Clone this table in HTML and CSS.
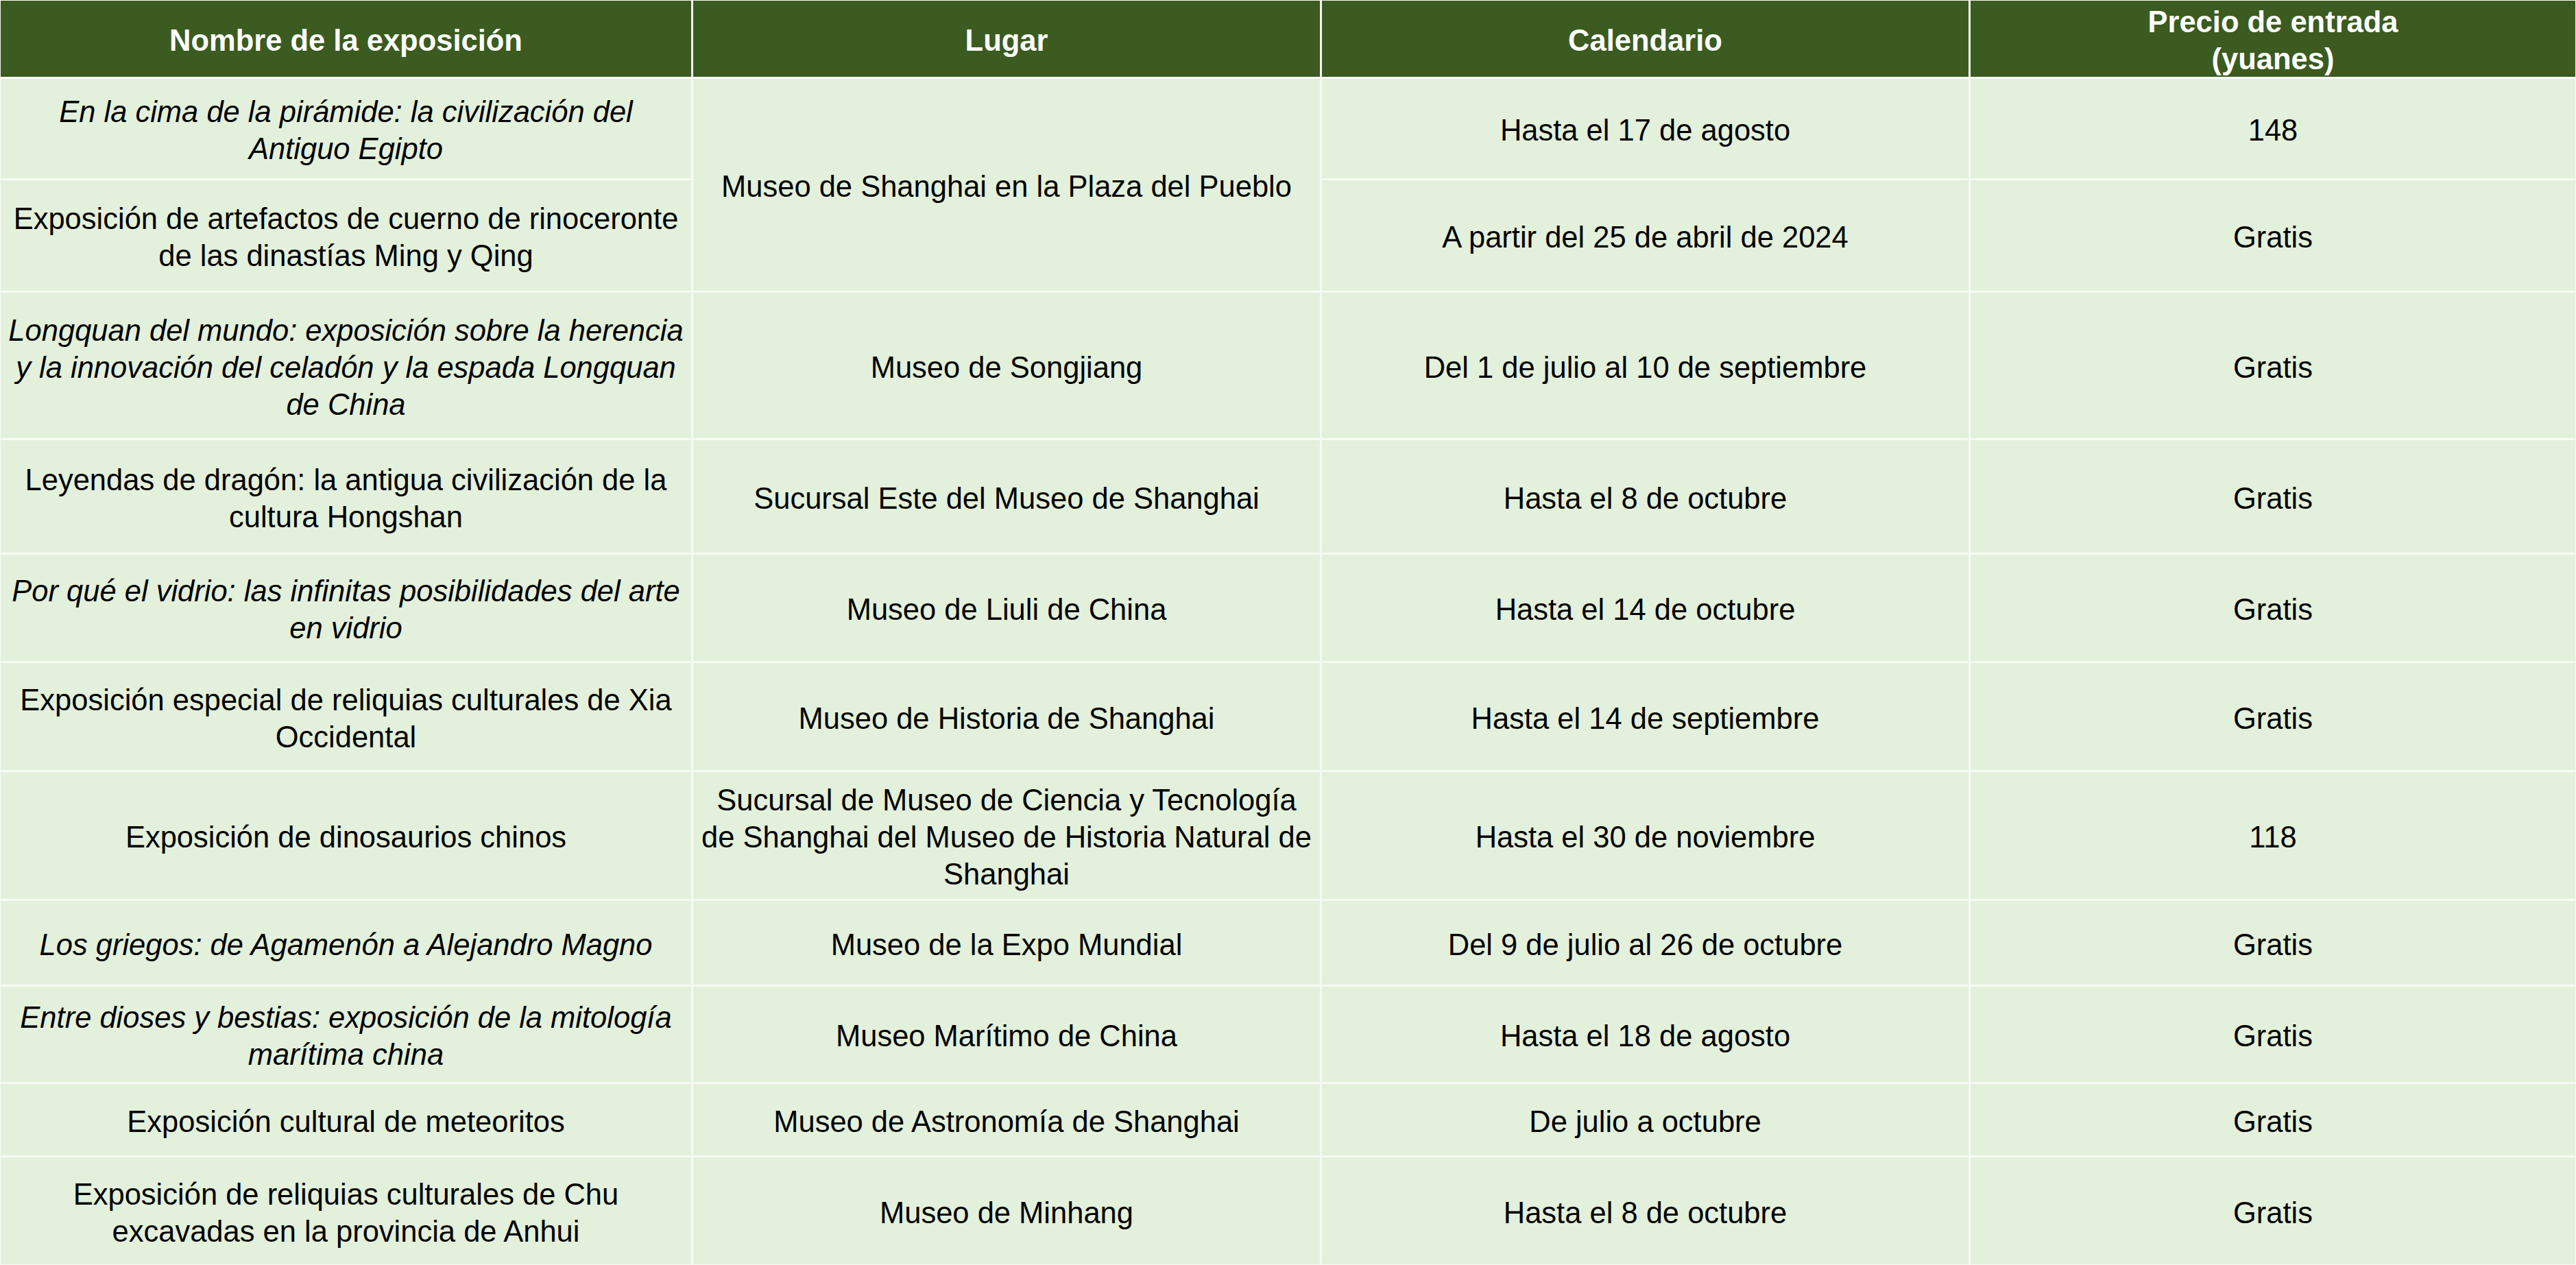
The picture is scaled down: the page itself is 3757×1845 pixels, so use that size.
FILE: index.html
```html
<!DOCTYPE html>
<html lang="es">
<head>
<meta charset="utf-8">
<title>Exposiciones en Shanghai</title>
<link rel="stylesheet" href="styles.css">
</head>
<body>
<div class="sheet">
  <div class="cell hd">Nombre de la exposición</div>
  <div class="cell hd">Lugar</div>
  <div class="cell hd">Calendario</div>
  <div class="cell hd">Precio de entrada<br>(yuanes)</div>

  <div class="cell it">En la cima de la pirámide: la civilización del<br>Antiguo Egipto</div>
  <div class="cell span2">Museo de Shanghai en la Plaza del Pueblo</div>
  <div class="cell">Hasta el 17 de agosto</div>
  <div class="cell">148</div>

  <div class="cell">Exposición de artefactos de cuerno de rinoceronte<br>de las dinastías Ming y Qing</div>
  <div class="cell">A partir del 25 de abril de 2024</div>
  <div class="cell">Gratis</div>

  <div class="cell it">Longquan del mundo: exposición sobre la herencia<br>y la innovación del celadón y la espada Longquan<br>de China</div>
  <div class="cell">Museo de Songjiang</div>
  <div class="cell">Del 1 de julio al 10 de septiembre</div>
  <div class="cell">Gratis</div>

  <div class="cell">Leyendas de dragón: la antigua civilización de la<br>cultura Hongshan</div>
  <div class="cell">Sucursal Este del Museo de Shanghai</div>
  <div class="cell">Hasta el 8 de octubre</div>
  <div class="cell">Gratis</div>

  <div class="cell it">Por qué el vidrio: las infinitas posibilidades del arte<br>en vidrio</div>
  <div class="cell">Museo de Liuli de China</div>
  <div class="cell">Hasta el 14 de octubre</div>
  <div class="cell">Gratis</div>

  <div class="cell">Exposición especial de reliquias culturales de Xia<br>Occidental</div>
  <div class="cell">Museo de Historia de Shanghai</div>
  <div class="cell">Hasta el 14 de septiembre</div>
  <div class="cell">Gratis</div>

  <div class="cell">Exposición de dinosaurios chinos</div>
  <div class="cell">Sucursal de Museo de Ciencia y Tecnología<br>de Shanghai del Museo de Historia Natural de<br>Shanghai</div>
  <div class="cell">Hasta el 30 de noviembre</div>
  <div class="cell">118</div>

  <div class="cell it">Los griegos: de Agamenón a Alejandro Magno</div>
  <div class="cell">Museo de la Expo Mundial</div>
  <div class="cell">Del 9 de julio al 26 de octubre</div>
  <div class="cell">Gratis</div>

  <div class="cell it">Entre dioses y bestias: exposición de la mitología<br>marítima china</div>
  <div class="cell">Museo Marítimo de China</div>
  <div class="cell">Hasta el 18 de agosto</div>
  <div class="cell">Gratis</div>

  <div class="cell">Exposición cultural de meteoritos</div>
  <div class="cell">Museo de Astronomía de Shanghai</div>
  <div class="cell">De julio a octubre</div>
  <div class="cell">Gratis</div>

  <div class="cell">Exposición de reliquias culturales de Chu<br>excavadas en la provincia de Anhui</div>
  <div class="cell">Museo de Minhang</div>
  <div class="cell">Hasta el 8 de octubre</div>
  <div class="cell">Gratis</div>
</div>
</body>
</html>
```

FILE: styles.css
```css
html, body {
  margin: 0;
  padding: 0;
  background: #ffffff;
  overflow: hidden;
}

.sheet {
  width: 3757px;
  height: 1845px;
  box-sizing: border-box;
  padding: 1px;
  background: #f7faf4;
  display: grid;
  grid-template-columns: 1007px 914px 943px 882px;
  grid-template-rows: 111px 145px 161px 212px 164px 155px 156px 185px 122px 139px 104px 156px;
  column-gap: 3px;
  row-gap: 3px;
  font-family: "Liberation Sans", Arial, sans-serif;
  font-size: 43.5px;
  line-height: 54px;
  color: #000000;
}

.cell {
  background: #e3f0db;
  display: flex;
  align-items: center;
  justify-content: center;
  text-align: center;
  white-space: nowrap;
  overflow: visible;
  box-sizing: border-box;
  padding-top: 5px;
}

.hd {
  background: #3b5b20;
  color: #ffffff;
  font-weight: bold;
  overflow: hidden;
}

.it {
  font-style: italic;
}

.span2 {
  grid-row: span 2;
}
```
